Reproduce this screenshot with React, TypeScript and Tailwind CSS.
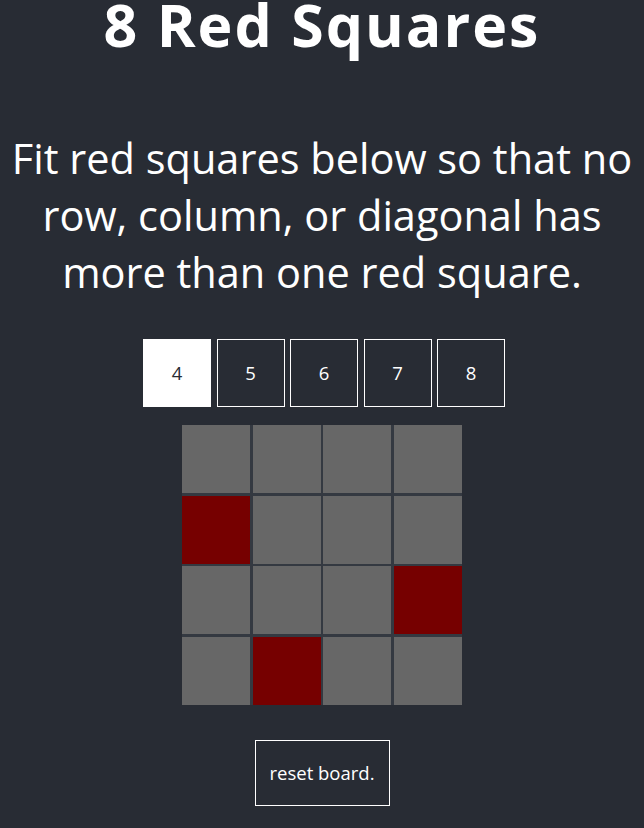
import React, { useState } from 'react';

const sizes = [4, 5, 6, 7, 8];

const App: React.FC = () => {
  const [size, setSize] = useState(4);
  const [queens, setQueens] = useState<string[]>(['1-0', '2-3', '3-1']);

  const toggle = (key: string) => {
    setQueens((q) => (q.includes(key) ? q.filter((k) => k !== key) : [...q, key]));
  };

  return (
    <div className="min-h-[828px] w-full bg-[#282c34] text-white flex flex-col items-center font-['Open_Sans',sans-serif]">
      <h1 className="text-[59px] font-bold leading-[49px] tracking-[2px]">8 Red Squares</h1>
      <p className="mt-[81px] text-[41.5px] leading-[57px] text-center w-[626px]">
        Fit red squares below so that no row, column, or diagonal has more than one red square.
      </p>
      <div className="mt-[38px] ml-[4px] flex gap-[5.5px] text-[18.5px]">
        {sizes.map((n) => (
          <button
            key={n}
            onClick={() => setSize(n)}
            className={
              n === size
                ? 'w-[68px] h-[68px] bg-white text-[#282c34] border border-white'
                : 'w-[68px] h-[68px] bg-transparent text-white border border-white'
            }
          >
            {n}
          </button>
        ))}
      </div>
      <div className="mt-[18px] grid grid-cols-4 gap-[2.5px] bg-[#343941]">
        {Array.from({ length: 4 }).map((_, r) =>
          Array.from({ length: 4 }).map((_, c) => {
            const key = `${r}-${c}`;
            return (
              <div
                key={key}
                onClick={() => toggle(key)}
                className={queens.includes(key) ? 'w-[68px] h-[68px] bg-[#760000]' : 'w-[68px] h-[68px] bg-[#676767]'}
              />
            );
          })
        )}
      </div>
      <button
        onClick={() => setQueens([])}
        className="mt-[35px] w-[135px] h-[66px] border border-white text-white text-[18.5px]"
      >
        reset board.
      </button>
    </div>
  );
};

export default App;
